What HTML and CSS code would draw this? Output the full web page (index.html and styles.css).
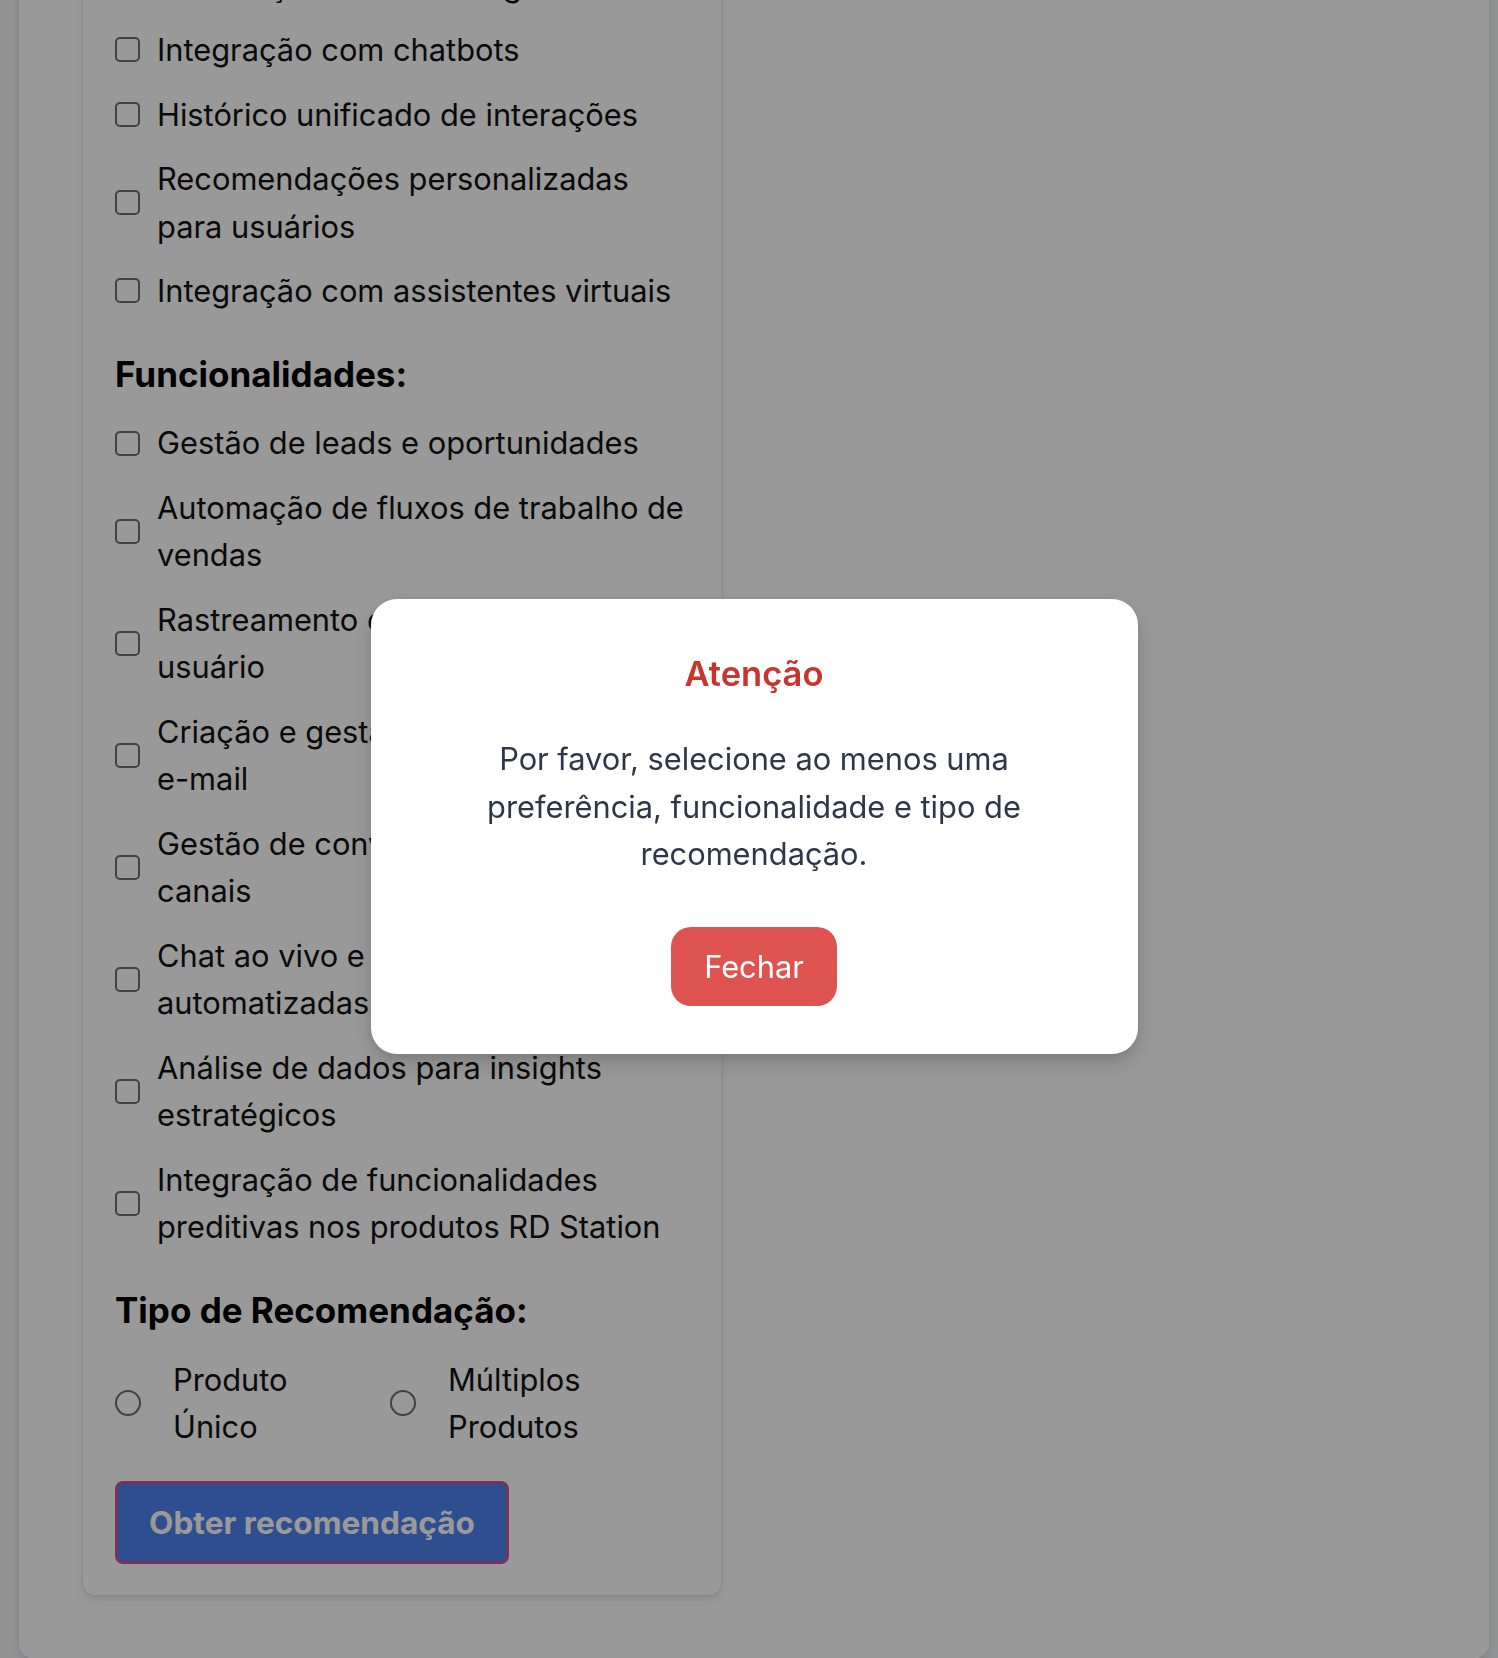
FILE: index.html
```html
<!DOCTYPE html>
<html lang="pt-BR">
<head>
<meta charset="utf-8">
<title>Recomendador RD Station</title>
<link rel="stylesheet" href="styles.css">
</head>
<body>
<div class="page">
  <form class="card">
    <h2 class="group-title">Preferências:</h2>
    <ul class="options">
      <li><label class="opt"><input type="checkbox" class="cb"><span class="opt-text">Automação de marketing</span></label></li>
      <li><label class="opt"><input type="checkbox" class="cb"><span class="opt-text">Integração com chatbots</span></label></li>
      <li><label class="opt"><input type="checkbox" class="cb"><span class="opt-text">Histórico unificado de interações</span></label></li>
      <li><label class="opt"><input type="checkbox" class="cb"><span class="opt-text">Recomendações personalizadas para usuários</span></label></li>
      <li><label class="opt"><input type="checkbox" class="cb"><span class="opt-text">Integração com assistentes virtuais</span></label></li>
    </ul>

    <h2 class="group-title">Funcionalidades:</h2>
    <ul class="options">
      <li><label class="opt"><input type="checkbox" class="cb"><span class="opt-text">Gestão de leads e oportunidades</span></label></li>
      <li><label class="opt"><input type="checkbox" class="cb"><span class="opt-text">Automação de fluxos de trabalho de vendas</span></label></li>
      <li><label class="opt"><input type="checkbox" class="cb"><span class="opt-text">Rastreamento de comportamento do usuário</span></label></li>
      <li><label class="opt"><input type="checkbox" class="cb"><span class="opt-text">Criação e gestão de campanhas de e-mail</span></label></li>
      <li><label class="opt"><input type="checkbox" class="cb"><span class="opt-text">Gestão de conversas em diferentes canais</span></label></li>
      <li><label class="opt"><input type="checkbox" class="cb"><span class="opt-text">Chat ao vivo e respostas automatizadas</span></label></li>
      <li><label class="opt"><input type="checkbox" class="cb"><span class="opt-text">Análise de dados para insights estratégicos</span></label></li>
      <li><label class="opt"><input type="checkbox" class="cb"><span class="opt-text">Integração de funcionalidades preditivas nos produtos RD Station</span></label></li>
    </ul>

    <h2 class="group-title">Tipo de Recomendação:</h2>
    <div class="radios">
      <label class="radio-opt"><input type="radio" name="tipo" class="rb"><span class="radio-text">Produto Único</span></label>
      <label class="radio-opt"><input type="radio" name="tipo" class="rb"><span class="radio-text">Múltiplos Produtos</span></label>
    </div>

    <button type="button" class="submit">Obter recomendação</button>
  </form>
</div>

<div class="overlay"></div>
<div class="modal-wrap">
  <div class="modal" role="dialog">
    <h3 class="modal-title">Atenção</h3>
    <p class="modal-text">Por favor, selecione ao menos uma preferência, funcionalidade e tipo de recomendação.</p>
    <button type="button" class="modal-btn">Fechar</button>
  </div>
</div>
</body>
</html>
```
FILE: styles.css
```css
* { box-sizing: border-box; }

html, body {
  margin: 0;
  padding: 0;
}

body {
  background: #f3f4f6;
  font-family: Inter, "Noto Sans", "Liberation Sans", sans-serif;
  color: #000;
  overflow: hidden;
  height: 1658px;
}

.page {
  margin: -202.5px 9px 0 19px;
  padding: 64px;
  background: #ffffff;
  border-radius: 16px;
  box-shadow: 0 4px 10px rgba(0, 0, 0, 0.12);
}

.card {
  width: 638px;
  padding: 32px 20px 31px 32px;
  background: #ffffff;
  border-radius: 12px;
  box-shadow: 0 4px 8px rgba(0, 0, 0, 0.1), 0 1px 3px rgba(0, 0, 0, 0.08);
}

.group-title {
  margin: 36.4px 0 20.6px;
  font-size: 35px;
  line-height: 47.6px;
  font-weight: 700;
  color: #000;
}

.group-title:first-child {
  margin-top: 0;
}

.options {
  list-style: none;
  margin: 0;
  padding: 0;
}

.options li {
  margin-bottom: 16.85px;
}

.opt {
  display: flex;
  align-items: center;
  font-size: 30.8px;
  line-height: 47.6px;
  color: #111;
}

.cb {
  appearance: none;
  -webkit-appearance: none;
  flex-shrink: 0;
  width: 25px;
  height: 25px;
  margin: 0 17px 0 0;
  border: 2px solid #6e6e6e;
  border-radius: 5px;
  background: #fff;
}

.radios {
  display: flex;
  margin-bottom: 30px;
}

.radio-opt {
  display: flex;
  align-items: center;
  width: 275px;
  font-size: 30.8px;
  line-height: 47.6px;
  color: #111;
}

.rb {
  appearance: none;
  -webkit-appearance: none;
  flex-shrink: 0;
  width: 26px;
  height: 26px;
  margin: 0 32px 0 0;
  border: 2px solid #6e6e6e;
  border-radius: 50%;
  background: #fff;
}

.radio-text {
  width: 150px;
}

.submit {
  display: block;
  width: 394px;
  height: 83px;
  padding: 0;
  border: 3px solid #c65897;
  border-radius: 8px;
  background: #4e82ee;
  color: #ffffff;
  font-family: inherit;
  font-size: 31.6px;
  font-weight: 700;
}

.overlay {
  position: fixed;
  inset: 0;
  background: rgba(0, 0, 0, 0.4);
  z-index: 10;
}

.modal-wrap {
  position: fixed;
  inset: 0;
  z-index: 20;
  display: flex;
  align-items: center;
  justify-content: center;
  padding-left: 10px;
}

.modal {
  width: 767px;
  padding: 48px;
  background: #ffffff;
  border-radius: 26px;
  box-shadow: 0 10px 25px rgba(0, 0, 0, 0.15), 0 4px 10px rgba(0, 0, 0, 0.08);
  text-align: center;
  margin-top: -5px;
}

.modal-title {
  margin: 0 0 34px;
  font-size: 34.5px;
  line-height: 54px;
  font-weight: 600;
  color: #c8352f;
}

.modal-text {
  max-width: 620px;
  margin: 0 auto 49px;
  font-size: 30.8px;
  line-height: 47.6px;
  color: #2d3748;
}

.modal-btn {
  display: inline-block;
  height: 79px;
  padding: 0 33px;
  border: 0;
  border-radius: 20px;
  background: #de5350;
  color: #ffffff;
  font-family: inherit;
  font-size: 30.8px;
  line-height: 47.6px;
}
```
